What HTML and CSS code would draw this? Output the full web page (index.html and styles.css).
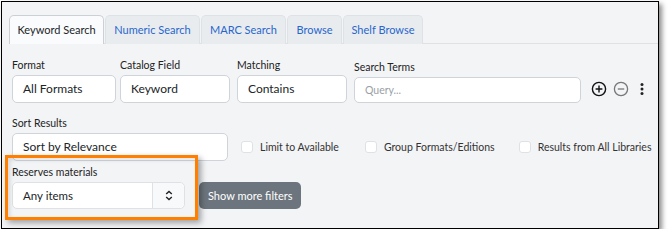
FILE: index.html
```html
<!DOCTYPE html>
<html lang="en">
<head>
    <meta charset="UTF-8">
    <title>Catalog Search</title>
    <link rel="stylesheet" href="styles.css">
</head>
<body>
    <div class="frame">
        <div class="tabs">
            <div class="tab active t-keyword">Keyword Search</div>
            <div class="tab t-numeric">Numeric Search</div>
            <div class="tab t-marc">MARC Search</div>
            <div class="tab t-browse">Browse</div>
            <div class="tab t-shelf">Shelf Browse</div>
        </div>

        <div class="panel">
            <div class="row row-terms">
                <div class="field f-format">
                    <label>Format</label>
                    <div class="input">All Formats</div>
                </div>
                <div class="field f-catalog">
                    <label>Catalog Field</label>
                    <div class="input">Keyword</div>
                </div>
                <div class="field f-matching">
                    <label>Matching</label>
                    <div class="input">Contains</div>
                </div>
                <div class="field f-query">
                    <label>Search Terms</label>
                    <div class="input placeholder">Query...</div>
                </div>
                <div class="row-actions">
                    <svg class="icon" width="16" height="16" viewBox="0 0 16 16">
                        <circle cx="8" cy="8" r="6.6" fill="none" stroke="#111" stroke-width="1.4"/>
                        <path d="M8 4.6v6.8M4.6 8h6.8" stroke="#111" stroke-width="1.4"/>
                    </svg>
                    <svg class="icon" width="16" height="16" viewBox="0 0 16 16">
                        <circle cx="8" cy="8" r="6.6" fill="none" stroke="#777" stroke-width="1.3"/>
                        <path d="M4.8 8h6.4" stroke="#777" stroke-width="1.3"/>
                    </svg>
                    <svg class="icon kebab" width="6" height="16" viewBox="0 0 6 16">
                        <circle cx="3" cy="3.5" r="1.5" fill="#222"/>
                        <circle cx="3" cy="8" r="1.5" fill="#222"/>
                        <circle cx="3" cy="12.5" r="1.5" fill="#222"/>
                    </svg>
                </div>
            </div>

            <div class="row row-sort">
                <div class="field f-sort">
                    <label>Sort Results</label>
                    <div class="input">Sort by Relevance</div>
                </div>
                <div class="check c-avail"><span class="box"></span>Limit to Available</div>
                <div class="check c-group"><span class="box"></span>Group Formats/Editions</div>
                <div class="check c-libs"><span class="box"></span>Results from All Libraries</div>
            </div>

            <div class="row row-reserves">
                <div class="field f-reserves">
                    <label>Reserves materials</label>
                    <div class="select">
                        <div class="select-value">Any items</div>
                        <div class="select-toggle">
                            <svg width="8" height="11" viewBox="0 0 8 11">
                                <path d="M1.2 4L4 1.4 6.8 4M1.2 7L4 9.6 6.8 7" fill="none" stroke="#222" stroke-width="1.4"/>
                            </svg>
                        </div>
                    </div>
                </div>
                <button class="more-btn">Show more filters</button>
            </div>
        </div>

        <div class="highlight"></div>
    </div>
</body>
</html>
```

FILE: styles.css
```css
body {
    margin: 0;
    background-color: #fff;
    font-family: Lato, "Noto Sans", sans-serif;
    color: #212529;
}

.frame {
    position: relative;
    margin: 1px 0 0 1px;
    width: 656px;
    height: 226px;
    border: 1px solid #000;
    background-color: #f3f4f6;
    box-shadow: 3px 3px 5px rgba(0, 0, 0, 0.45);
}

.tabs {
    display: flex;
    margin: 13px 0 0 7px;
    border-bottom: 1px solid #dee2e6;
}

.tab {
    box-sizing: border-box;
    height: 29px;
    line-height: 28px;
    margin-bottom: -1px;
    margin-right: 1px;
    font-size: 11px;
    text-align: center;
    color: #2766cc;
    background-color: #e9ecef;
    border: 1px solid #dee2e6;
    border-bottom: none;
    border-radius: 5px 5px 0 0;
}

.tab.active {
    color: #212529;
    background-color: #fafbfc;
    border-color: #ccd0d4;
}

.t-keyword { width: 95px; }
.t-numeric { width: 95px; }
.t-marc { width: 85px; }
.t-browse { width: 55px; }
.t-shelf { width: 80px; }

.panel {
    padding: 14px 0 0 10px;
}

.row {
    display: flex;
    align-items: flex-end;
}

.field {
    flex-shrink: 0;
}

.field label {
    display: block;
    font-size: 10.5px;
    line-height: 15px;
    margin-bottom: 2px;
    color: #222;
}

.input {
    box-sizing: border-box;
    height: 28px;
    line-height: 26px;
    padding-left: 10px;
    font-size: 12px;
    background-color: #fff;
    border: 1px solid #ced4da;
    border-radius: 5px;
}

.placeholder {
    color: #9aa0a6;
    font-size: 10.5px;
}

.f-format { width: 104px; }
.f-catalog { width: 110px; margin-left: 4px; }
.f-matching { width: 110px; margin-left: 7px; }
.f-query { width: 227px; margin-left: 7px; }
.f-query .input { height: 26px; line-height: 24px; }

.row-actions {
    display: flex;
    align-items: center;
    height: 28px;
    margin-left: 10px;
}

.icon {
    display: block;
    margin-right: 6px;
}

.kebab {
    margin-left: 4px;
}

.row-sort {
    margin-top: 13px;
}

.f-sort { width: 216px; }

.check {
    display: flex;
    flex-shrink: 0;
    align-items: center;
    height: 28px;
    white-space: nowrap;
    font-size: 10.5px;
    color: #333;
}

.check .box {
    box-sizing: border-box;
    width: 12px;
    height: 12px;
    margin-right: 7px;
    background-color: #fff;
    border: 1px solid #dee2e6;
    border-radius: 3px;
}

.c-avail { margin-left: 13px; }
.c-group { margin-left: 26px; }
.c-libs { margin-left: 24px; }

.row-reserves {
    margin-top: 4px;
}

.f-reserves { width: 173px; }

.select {
    display: flex;
    box-sizing: border-box;
    height: 27px;
    background-color: #fff;
    border: 1px solid #dee2e6;
    border-radius: 5px;
}

.select-value {
    flex: 1;
    line-height: 25px;
    padding-left: 10px;
    font-size: 11.5px;
}

.select-toggle {
    display: flex;
    align-items: center;
    justify-content: center;
    width: 31px;
    border-left: 1px solid #dee2e6;
    background-color: #f8f9fa;
    border-radius: 0 5px 5px 0;
}

.more-btn {
    height: 27px;
    margin-left: 14px;
    padding: 0 9px;
    font-family: inherit;
    font-size: 11px;
    color: #fff;
    background-color: #6c757d;
    border: none;
    border-radius: 5px;
}

.highlight {
    position: absolute;
    left: 3px;
    top: 153px;
    width: 187px;
    height: 59px;
    border: 3px solid #ff8000;
    box-shadow: 3px 3px 6px rgba(0, 0, 0, 0.35), inset 2px 2px 4px rgba(0, 0, 0, 0.12);
}
```
